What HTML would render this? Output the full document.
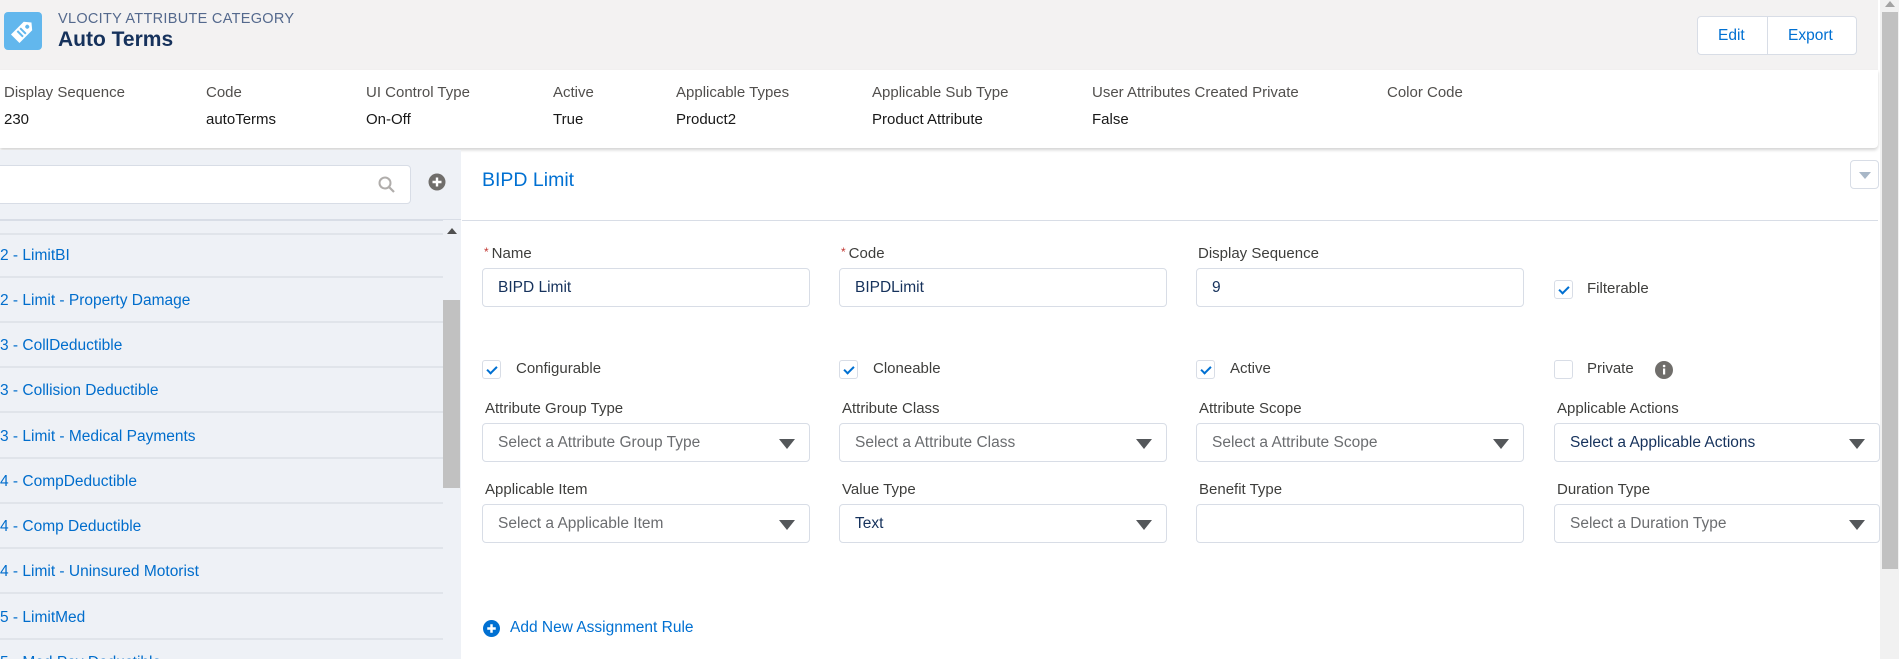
<!DOCTYPE html>
<html style="overflow:hidden;height:659px"><head><meta charset="utf-8"><style>
*{box-sizing:border-box;margin:0;padding:0}
body{width:1899px;height:659px;overflow:hidden;background:#fff;font-family:"Liberation Sans",sans-serif;color:#3e3e3c;position:relative;font-size:15px}
.a{position:absolute;white-space:nowrap}
.lbl{color:#3e3e3c;font-size:15px}
.inp{position:absolute;height:39px;border:1px solid #d8dde6;border-radius:4px;background:#fff;padding-left:15px;line-height:37px;font-size:15.5px;color:#16325c;white-space:nowrap}
.sel{color:#6b6d70}
.tri{position:absolute;right:14px;top:15px;width:0;height:0;border-left:8px solid transparent;border-right:8px solid transparent;border-top:10px solid #54575a}
.cb{position:absolute;width:19px;height:19px;border:1px solid #d8dde6;border-radius:3px;background:#fff}
.cb.on:after{content:"";position:absolute;left:6px;top:3px;width:4px;height:8px;border:solid #0070d2;border-width:0 2px 2px 0;transform:rotate(45deg)}
.li{position:absolute;left:0;width:443px;height:45px;border-bottom:2px solid #e0e4ea;color:#006dcc;font-size:15.5px;line-height:45px}
.req{color:#c23934;font-size:12px;vertical-align:top;margin-right:3px}
.hl{color:#514f4d}.hv{color:#181818}
</style></head><body>
<div class="a" style="left:0;top:0;width:1878px;height:70px;background:#f3f2f2"></div>
<div class="a" style="left:4px;top:12px;width:38px;height:38px;background:#62b7ed;border-radius:4px">
<svg width="38" height="38" viewBox="0 0 38 38"><g transform="rotate(45 19 19)"><path d="M13 12 L19 7 L25 12 L25 30 L13 30 Z" fill="#fff"/><circle cx="19" cy="13" r="2" fill="#62b7ed"/><rect x="15" y="18" width="8" height="2" fill="#62b7ed"/><rect x="15" y="22" width="8" height="2" fill="#62b7ed"/></g></svg></div>
<div class="a" style="left:58px;top:11px;font-size:14.5px;color:#54698d;letter-spacing:.3px">VLOCITY ATTRIBUTE CATEGORY</div>
<div class="a" style="left:58px;top:28px;font-size:21px;color:#16325c;font-weight:bold">Auto Terms</div>
<div class="a" style="left:1697px;top:16px;width:160px;height:39px;border:1px solid #d8dde6;border-radius:4px;background:#fff;color:#0070d2;font-size:15.5px;line-height:37px">
<span class="a" style="left:20px">Edit</span><span class="a" style="left:69px;top:0;height:37px;border-left:1px solid #d8dde6"></span><span class="a" style="left:90px">Export</span></div>
<div class="a" style="left:0;top:70px;width:1878px;height:78px;background:#fff;box-shadow:0 2px 3px rgba(0,0,0,.18);border-radius:0 0 4px 0"></div>
<div class="a lbl hl" style="left:4px;top:84px">Display Sequence</div><div class="a hv" style="left:4px;top:111px">230</div>
<div class="a lbl hl" style="left:206px;top:84px">Code</div><div class="a hv" style="left:206px;top:111px">autoTerms</div>
<div class="a lbl hl" style="left:366px;top:84px">UI Control Type</div><div class="a hv" style="left:366px;top:111px">On-Off</div>
<div class="a lbl hl" style="left:553px;top:84px">Active</div><div class="a hv" style="left:553px;top:111px">True</div>
<div class="a lbl hl" style="left:676px;top:84px">Applicable Types</div><div class="a hv" style="left:676px;top:111px">Product2</div>
<div class="a lbl hl" style="left:872px;top:84px">Applicable Sub Type</div><div class="a hv" style="left:872px;top:111px">Product Attribute</div>
<div class="a lbl hl" style="left:1092px;top:84px">User Attributes Created Private</div><div class="a hv" style="left:1092px;top:111px">False</div>
<div class="a lbl hl" style="left:1387px;top:84px">Color Code</div>
<!-- scrollbar -->
<div class="a" style="left:1880px;top:0;width:19px;height:659px;background:#f1f1f1"></div>
<div class="a" style="left:1882px;top:12px;width:16px;height:557px;background:#c1c1c1"></div>
<div class="a" style="left:1885px;top:1px;border-left:5px solid transparent;border-right:5px solid transparent;border-bottom:6px solid #a3a3a3"></div>
<!-- left panel -->
<div class="a" style="left:0;top:150px;width:461px;height:509px;background:#eef1f6"></div>
<div class="a" style="left:-4px;top:165px;width:415px;height:39px;background:#fff;border:1px solid #d8dde6;border-radius:4px"></div>
<svg class="a" style="left:377px;top:175px" width="20" height="20" viewBox="0 0 20 20"><circle cx="8" cy="8" r="5.5" fill="none" stroke="#b0adab" stroke-width="2"/><path d="M12 12 L17 17" stroke="#b0adab" stroke-width="2.2"/></svg>
<svg class="a" style="left:428px;top:173px" width="18" height="18" viewBox="0 0 18 18"><circle cx="9" cy="9" r="8.5" fill="#706e6b"/><path d="M9 4.5V13.5M4.5 9H13.5" stroke="#fff" stroke-width="2.4"/></svg>
<div class="a" style="left:0;top:219px;width:461px;border-top:2px solid #d8dde6"></div>
<div class="a" style="left:0;top:233px;width:443px;border-top:2px solid #e0e4ea"></div>
<div class="li" style="top:233px">2 - LimitBI</div>
<div class="li" style="top:278px">2 - Limit - Property Damage</div>
<div class="li" style="top:323px">3 - CollDeductible</div>
<div class="li" style="top:368px">3 - Collision Deductible</div>
<div class="li" style="top:414px">3 - Limit - Medical Payments</div>
<div class="li" style="top:459px">4 - CompDeductible</div>
<div class="li" style="top:504px">4 - Comp Deductible</div>
<div class="li" style="top:549px">4 - Limit - Uninsured Motorist</div>
<div class="li" style="top:595px">5 - LimitMed</div>
<div class="li" style="top:640px;height:19px;border:0;line-height:45px;overflow:hidden">5 - Med Pay Deductible</div>
<div class="a" style="left:443px;top:220px;width:18px;height:439px;background:#eef1f6"></div>
<div class="a" style="left:447px;top:228px;border-left:5px solid transparent;border-right:5px solid transparent;border-bottom:6px solid #505050"></div>
<div class="a" style="left:443px;top:300px;width:17px;height:188px;background:#c1c1c1"></div>
<!-- main -->
<div class="a" style="left:482px;top:169px;font-size:19.5px;color:#0070d2">BIPD Limit</div>
<div class="a" style="left:1850px;top:160px;width:29px;height:29px;border:1px solid #d8dde6;border-radius:4px;background:#fff"><span class="a" style="left:8px;top:11px;border-left:6px solid transparent;border-right:6px solid transparent;border-top:7px solid #a8b7c7"></span></div>
<div class="a" style="left:462px;top:220px;width:1416px;border-top:1px solid #d8dde6"></div>

<div class="a lbl" style="left:484px;top:245px"><span class="req">*</span>Name</div>
<div class="inp" style="left:482px;top:268px;width:328px">BIPD Limit</div>
<div class="a lbl" style="left:841px;top:245px"><span class="req">*</span>Code</div>
<div class="inp" style="left:839px;top:268px;width:328px">BIPDLimit</div>
<div class="a lbl" style="left:1198px;top:245px">Display Sequence</div>
<div class="inp" style="left:1196px;top:268px;width:328px">9</div>
<div class="cb on" style="left:1554px;top:280px"></div><div class="a lbl" style="left:1587px;top:280px">Filterable</div>

<div class="cb on" style="left:482px;top:360px"></div><div class="a lbl" style="left:516px;top:360px">Configurable</div>
<div class="cb on" style="left:839px;top:360px"></div><div class="a lbl" style="left:873px;top:360px">Cloneable</div>
<div class="cb on" style="left:1196px;top:360px"></div><div class="a lbl" style="left:1230px;top:360px">Active</div>
<div class="cb" style="left:1554px;top:360px"></div><div class="a lbl" style="left:1587px;top:360px">Private</div>
<svg class="a" style="left:1655px;top:361px" width="18" height="18" viewBox="0 0 18 18"><circle cx="9" cy="9" r="9" fill="#706e6b"/><rect x="8" y="7.5" width="2.2" height="6" fill="#fff"/><circle cx="9.1" cy="5" r="1.3" fill="#fff"/></svg>

<div class="a lbl" style="left:485px;top:400px">Attribute Group Type</div>
<div class="inp sel" style="left:482px;top:423px;width:328px">Select a Attribute Group Type<span class="tri"></span></div>
<div class="a lbl" style="left:842px;top:400px">Attribute Class</div>
<div class="inp sel" style="left:839px;top:423px;width:328px">Select a Attribute Class<span class="tri"></span></div>
<div class="a lbl" style="left:1199px;top:400px">Attribute Scope</div>
<div class="inp sel" style="left:1196px;top:423px;width:328px">Select a Attribute Scope<span class="tri"></span></div>
<div class="a lbl" style="left:1557px;top:400px">Applicable Actions</div>
<div class="inp" style="left:1554px;top:423px;width:326px">Select a Applicable Actions<span class="tri"></span></div>

<div class="a lbl" style="left:485px;top:481px">Applicable Item</div>
<div class="inp sel" style="left:482px;top:504px;width:328px">Select a Applicable Item<span class="tri"></span></div>
<div class="a lbl" style="left:842px;top:481px">Value Type</div>
<div class="inp" style="left:839px;top:504px;width:328px">Text<span class="tri"></span></div>
<div class="a lbl" style="left:1199px;top:481px">Benefit Type</div>
<div class="inp" style="left:1196px;top:504px;width:328px"></div>
<div class="a lbl" style="left:1557px;top:481px">Duration Type</div>
<div class="inp sel" style="left:1554px;top:504px;width:326px">Select a Duration Type<span class="tri"></span></div>

<svg class="a" style="left:483px;top:620px" width="17" height="17" viewBox="0 0 18 18"><circle cx="9" cy="9" r="9" fill="#0070d2"/><path d="M9 4.5V13.5M4.5 9H13.5" stroke="#fff" stroke-width="2.6"/></svg>
<div class="a" style="left:510px;top:619px;color:#0070d2;font-size:15.5px">Add New Assignment Rule</div>
</body></html>
